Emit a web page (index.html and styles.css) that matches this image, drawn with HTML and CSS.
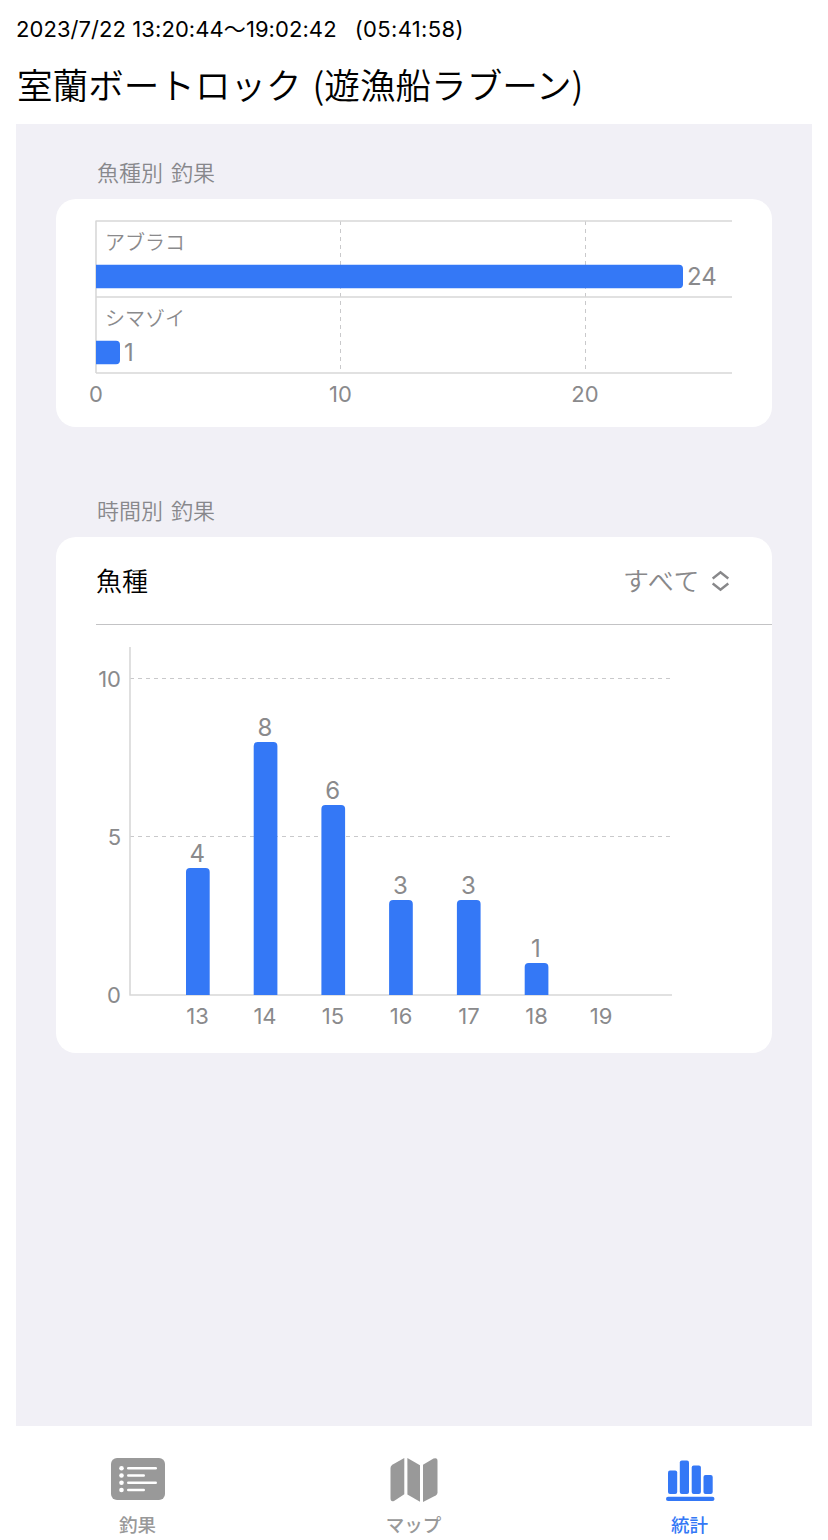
FILE: index.html
```html
<!DOCTYPE html>
<html lang="ja">
<head>
    <meta charset="UTF-8">
    <meta name="viewport" content="width=device-width, initial-scale=1.0">
    <title>室蘭ボートロック - 統計</title>
    <link rel="stylesheet" href="styles.css">
</head>
<body>
    <header class="trip-header">
        <div class="trip-time"><span>2023/7/22 13:20:44〜19:02:42</span><span class="trip-duration">(05:41:58)</span></div>
        <h1 class="trip-title">室蘭ボートロック (遊漁船ラブーン)</h1>
    </header>

    <main class="stats">
        <section class="stats-section">
            <h2 class="section-title">魚種別 釣果</h2>
            <div class="card">
                <svg class="chart" width="716" height="228" viewBox="0 0 716 228">
                    <path class="grid" d="M284.5 22V174M529.5 22V174"/>
                    <path class="axis" d="M40 22V174M39.5 22H676M40 98H676M40 174H676"/>
                    <path class="bar" d="M40 65.7H623a4 4 0 0 1 4 4V85.3a4 4 0 0 1-4 4H40Z"/>
                    <path class="bar" d="M40 141.7H60a4 4 0 0 1 4 4V161.3a4 4 0 0 1-4 4H40Z"/>
                    <text class="name" x="49" y="51">アブラコ</text>
                    <text class="name" x="49" y="127">シマゾイ</text>
                    <text class="value" x="631" y="86">24</text>
                    <text class="value" x="68" y="162">1</text>
                    <g class="tick middle">
                        <text x="40" y="203">0</text>
                        <text x="284.5" y="203">10</text>
                        <text x="529" y="203">20</text>
                    </g>
                </svg>
            </div>
        </section>

        <section class="stats-section">
            <h2 class="section-title">時間別 釣果</h2>
            <div class="card">
                <div class="picker-row">
                    <span class="picker-label">魚種</span>
                    <span class="picker-value"><span class="picker-text">すべて</span>
                        <svg class="picker-icon" width="18" height="22" viewBox="0 0 18 22">
                            <path d="M.7 8.5L8.5 2.2L16.3 8.5M.7 13.5L8.5 19.8L16.3 13.5"/>
                        </svg>
                    </span>
                </div>
                <svg class="chart" width="716" height="427.5" viewBox="0 0 716 427.5">
                    <path class="grid" d="M74 53.5H616M74 211.5H616"/>
                    <path class="axis" d="M74 22V370.5M73.5 370H616"/>
                    <path class="bar" d="M130 370V247a4 4 0 0 1 4-4h15.7a4 4 0 0 1 4 4V370Z"/>
                    <path class="bar" d="M197.7 370V121a4 4 0 0 1 4-4h15.7a4 4 0 0 1 4 4V370Z"/>
                    <path class="bar" d="M265.4 370V184a4 4 0 0 1 4-4h15.7a4 4 0 0 1 4 4V370Z"/>
                    <path class="bar" d="M333.1 370V279a4 4 0 0 1 4-4h15.7a4 4 0 0 1 4 4V370Z"/>
                    <path class="bar" d="M400.9 370V279a4 4 0 0 1 4-4h15.7a4 4 0 0 1 4 4V370Z"/>
                    <path class="bar" d="M468.7 370V342a4 4 0 0 1 4-4h15.7a4 4 0 0 1 4 4V370Z"/>
                    <g class="value middle">
                        <text x="141.3" y="237">4</text>
                        <text x="209" y="111">8</text>
                        <text x="276.8" y="174">6</text>
                        <text x="344.5" y="269">3</text>
                        <text x="412.3" y="269">3</text>
                        <text x="480" y="332">1</text>
                    </g>
                    <g class="tick middle">
                        <text x="141.5" y="399">13</text>
                        <text x="209" y="399">14</text>
                        <text x="277" y="399">15</text>
                        <text x="345" y="399">16</text>
                        <text x="413" y="399">17</text>
                        <text x="480.5" y="399">18</text>
                        <text x="545" y="399">19</text>
                    </g>
                    <g class="tick end">
                        <text x="65" y="62">10</text>
                        <text x="65" y="220">5</text>
                        <text x="65" y="378">0</text>
                    </g>
                </svg>
            </div>
        </section>
    </main>

    <nav class="tab-bar">
        <a class="tab">
            <svg class="tab-icon" width="54" height="48" viewBox="0 0 54 48">
                <rect x="0" y="3" width="54" height="42" rx="6"/>
                <g class="cutout">
                    <circle cx="10.5" cy="13.3" r="2.3"/>
                    <circle cx="10.5" cy="20.5" r="2.3"/>
                    <circle cx="10.5" cy="27.8" r="2.3"/>
                    <circle cx="10.5" cy="35" r="2.3"/>
                    <rect x="16" y="12" width="30" height="2.6" rx="1.3"/>
                    <rect x="16" y="19.2" width="18" height="2.6" rx="1.3"/>
                    <rect x="16" y="26.5" width="30" height="2.6" rx="1.3"/>
                    <rect x="16" y="33.7" width="18" height="2.6" rx="1.3"/>
                </g>
            </svg>
            <span class="tab-label">釣果</span>
        </a>
        <a class="tab">
            <svg class="tab-icon" width="48" height="48" viewBox="0 0 48 48">
                <path d="M2.3 9.8L14.3 3V39.3L4 46Q.5 47.2 .5 43V13Q.5 11 2.3 9.8Z"/>
                <path d="M17.4 3L30 10.3V46.8L17.4 39.5Z"/>
                <path d="M33 9.8L43.5 3.6Q47.5 2 47.5 6V37.5Q47.5 39.5 45.7 40.5L33 47Z"/>
            </svg>
            <span class="tab-label">マップ</span>
        </a>
        <a class="tab active">
            <svg class="tab-icon" width="48" height="48" viewBox="0 0 48 48">
                <rect x="2" y="15.5" width="9.2" height="23.5" rx="2"/>
                <rect x="13.8" y="5.5" width="9.2" height="33.5" rx="2"/>
                <rect x="25.7" y="10.5" width="9.2" height="28.5" rx="2"/>
                <rect x="37.5" y="20" width="9.2" height="19" rx="2"/>
                <rect x="0" y="41.8" width="48.5" height="4.2" rx="2.1"/>
            </svg>
            <span class="tab-label">統計</span>
        </a>
    </nav>
</body>
</html>
```
FILE: styles.css
```css
* {
    box-sizing: border-box;
}
body {
    display: flex;
    flex-direction: column;
    height: 1540px;
    margin: 0;
    overflow: hidden;
    font-family: Inter, "Noto Sans CJK JP", sans-serif;
    color: #000;
    background-color: #fff;
}
h1, h2 {
    margin: 0;
    font-weight: 350;
}
.trip-header {
    height: 124px;
    padding: 13px 16px 0;
}
.trip-time {
    display: flex;
    gap: 18px;
    height: 32px;
    font-size: 22px;
    line-height: 32px;
    letter-spacing: 0.07px;
}
.trip-duration {
    letter-spacing: 0.35px;
}
.trip-title {
    margin-top: 12px;
    padding-left: 1px;
    font-family: "Noto Sans CJK JP", sans-serif;
    font-size: 35.6px;
    line-height: 54px;
    word-spacing: 3px;
    white-space: nowrap;
}
.stats {
    height: 1302px;
    margin: 0 16px;
    padding: 31px 40px 0;
    background-color: #f1f0f6;
}
.stats-section {
    margin-bottom: 66px;
}
.section-title {
    height: 44px;
    padding-left: 41px;
    font-family: "Noto Sans CJK JP", sans-serif;
    font-size: 22px;
    line-height: 32px;
    word-spacing: 3px;
    color: #88888c;
}
.card {
    overflow: hidden;
    border-radius: 20px;
    background-color: #fff;
}
.picker-row {
    display: flex;
    align-items: center;
    justify-content: space-between;
    height: 88px;
    margin-left: 40px;
    padding-right: 42px;
    border-bottom: 1px solid #c3c3c5;
    font-family: "Noto Sans CJK JP", sans-serif;
    font-size: 26px;
    font-weight: 350;
}
.picker-label,
.picker-text {
    padding-bottom: 3px;
}
.picker-value {
    display: flex;
    align-items: center;
    gap: 12px;
    color: #88888a;
}
.picker-text {
    letter-spacing: 0.6px;
}
.picker-icon {
    fill: none;
    stroke: #88888a;
    stroke-width: 2.4;
}
.chart {
    display: block;
    fill: #8a8a8c;
}
.axis {
    fill: none;
    stroke: #d8d8d8;
    stroke-width: 1.6;
}
.grid {
    fill: none;
    stroke: #c9c9cb;
    stroke-width: 1;
    stroke-dasharray: 4 4;
}
.bar {
    fill: #3478f6;
}
.name {
    font-family: "Noto Sans CJK JP", sans-serif;
    font-size: 20px;
    font-weight: 350;
}
.value {
    font-size: 24px;
}
.tick {
    font-size: 22px;
}
.middle {
    text-anchor: middle;
}
.end {
    text-anchor: end;
}
.tab-bar {
    display: grid;
    grid-template-columns: repeat(3, 1fr);
    height: 114px;
    padding-top: 29px;
}
.tab {
    display: flex;
    flex-direction: column;
    align-items: center;
    padding-right: 1px;
    color: #999;
}
.tab-icon {
    fill: currentColor;
    overflow: visible;
}
.tab.active {
    color: #3478f6;
}
.cutout {
    fill: #fff;
}
.tab-label {
    margin-top: 7px;
    font-family: "Noto Sans CJK JP", sans-serif;
    font-size: 18.5px;
    font-weight: 500;
    line-height: 28px;
}
```
